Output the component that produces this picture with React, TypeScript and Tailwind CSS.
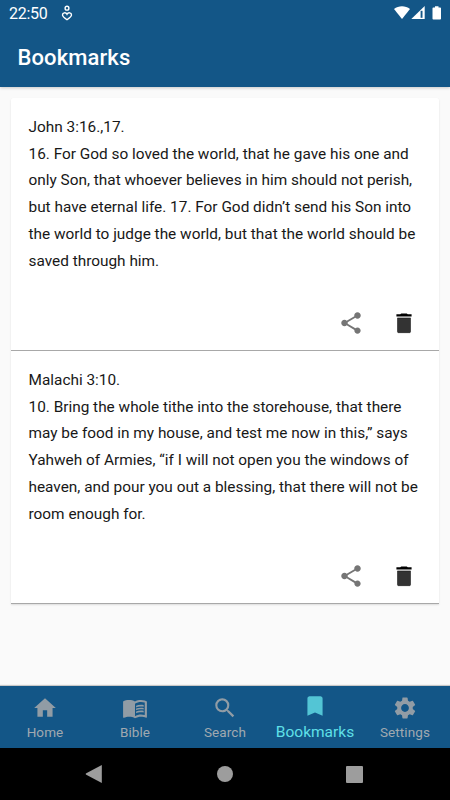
import type { IconType } from 'react-icons'
import { MdBookmark, MdHome, MdMenuBook, MdSearch, MdSettings, MdShare } from 'react-icons/md'

interface Bookmark {
  reference: string
  lines: string[]
}

const bookmarks: Bookmark[] = [
  {
    reference: 'John 3:16.,17.',
    lines: [
      '16. For God so loved the world, that he gave his one and',
      'only Son, that whoever believes in him should not perish,',
      'but have eternal life. 17. For God didn’t send his Son into',
      'the world to judge the world, but that the world should be',
      'saved through him.',
    ],
  },
  {
    reference: 'Malachi 3:10.',
    lines: [
      '10. Bring the whole tithe into the storehouse, that there',
      'may be food in my house, and test me now in this,” says',
      'Yahweh of Armies, “if I will not open you the windows of',
      'heaven, and pour you out a blessing, that there will not be',
      'room enough for.',
    ],
  },
]

const tabs: { label: string; icon: IconType; active?: boolean }[] = [
  { label: 'Home', icon: MdHome },
  { label: 'Bible', icon: MdMenuBook },
  { label: 'Search', icon: MdSearch },
  { label: 'Bookmarks', icon: MdBookmark, active: true },
  { label: 'Settings', icon: MdSettings },
]

function TrashIcon() {
  return (
    <svg viewBox="0 0 24 24" className="h-[26px] w-[26px]">
      <path d="M6 7.3h12V20c0 .5-.4.9-.9.9H6.9c-.5 0-.9-.4-.9-.9z" fill="#333" stroke="#111" strokeWidth=".5" />
      <path d="M19 4h-3.5l-1-.8h-5l-1 .8H5v2h14z" fill="#000" />
    </svg>
  )
}

function StatusBar() {
  return (
    <div className="flex h-7 items-center pl-[9px] pr-[8px] text-white">
      <span className="text-[16px] leading-none tracking-[-0.3px]">22:50</span>
      <svg viewBox="0 0 12 16" className="ml-[14px] h-4 w-3 -translate-y-px" fill="none" stroke="currentColor" strokeWidth="1.4">
        <circle cx="6" cy="3.2" r="1.9" />
        <path d="M6 9.2C4.9 7.2 1.5 7.3 1.5 9.9c0 1.6 2.1 3.1 4.5 4.8 2.4-1.7 4.5-3.2 4.5-4.8C10.5 7.3 7.1 7.2 6 9.2z" />
      </svg>
      <svg viewBox="0 0 48 16" className="ml-auto h-4 w-12 -translate-y-px" fill="currentColor">
        <path d="M0 4.1C4.5.4 11.5.4 16 4.1L8 14z" />
        <path d="M30.7 1v13H17.3z" />
        <path d="M26.6 5.8h1.9v7h-1.9z" fill="#135687" />
        <path d="M41 1.2h3.5v1.2h1.7c.5 0 .8.3.8.8v10.5c0 .5-.3.8-.8.8h-6.9c-.5 0-.8-.3-.8-.8V3.2c0-.5.3-.8.8-.8H41z" />
      </svg>
    </div>
  )
}

function BookmarkCard({ bookmark }: { bookmark: Bookmark }) {
  return (
    <article className="flex h-[253px] flex-col border-b border-[#a8a8a8] bg-white px-[17.5px] pt-[16px] first:rounded-t-[3px]">
      <div className="whitespace-nowrap text-[15.38px] leading-[26.7px] text-[#181818]">
        <h2>{bookmark.reference}</h2>
        {bookmark.lines.map(line => (
          <p key={line}>{line}</p>
        ))}
      </div>
      <div className="mt-auto mb-[14px] flex justify-end gap-[27px] pr-[4.5px]">
        <button aria-label="Share">
          <MdShare className="h-[26px] w-[26px] text-[#757575]" />
        </button>
        <button aria-label="Delete">
          <TrashIcon />
        </button>
      </div>
    </article>
  )
}

export default function App() {
  return (
    <div className="flex h-[800px] w-[450px] flex-col overflow-hidden bg-[#fafafa] font-[Roboto,sans-serif]">
      <header className="h-[87px] bg-[#135687] shadow-[0_1px_3px_rgba(0,0,0,0.2)]">
        <StatusBar />
        <h1 className="pl-[17.5px] pt-[15px] text-[22px] font-medium leading-[30px] tracking-[0.1px] text-white">Bookmarks</h1>
      </header>

      <main className="flex-1 px-[11px] pt-[11px]">
        <div className="rounded-t-[3px] shadow-[0_1px_2px_rgba(0,0,0,0.12)]">
          {bookmarks.map(b => (
            <BookmarkCard key={b.reference} bookmark={b} />
          ))}
        </div>
      </main>

      <nav className="grid h-[62px] grid-cols-5 bg-[#135687] shadow-[0_-1px_1px_rgba(0,0,0,0.2)]">
        {tabs.map(({ label, icon: Icon, active }) => (
          <a
            key={label}
            className={
              active
                ? 'flex flex-col items-center pt-[7px] text-[#53c5d5]'
                : 'flex flex-col items-center pt-[9px] text-[#919ca5]'
            }
          >
            <Icon className="h-[26px] w-[26px]" />
            <span
              className={
                active
                  ? 'mt-[4px] text-[15.5px] leading-[18px] text-[#5fe0e8]'
                  : 'mt-[2px] text-[13.5px] leading-[18px] tracking-[0.1px] text-[#a0a9b0]'
              }
            >
              {label}
            </span>
          </a>
        ))}
      </nav>

      {/* System navigation */}
      <div className="flex h-[52px] items-center justify-between bg-black pl-[85px] pr-[87px]">
        <svg viewBox="0 0 18 18" className="h-[18px] w-[18px]" fill="#9d9d9d">
          <path d="M16.8 0v18L.8 9.5v-1z" />
        </svg>
        <div className="h-4 w-4 rounded-full bg-[#9d9d9d]" />
        <div className="h-[17px] w-[17px] rounded-[1px] bg-[#9d9d9d]" />
      </div>
    </div>
  )
}
